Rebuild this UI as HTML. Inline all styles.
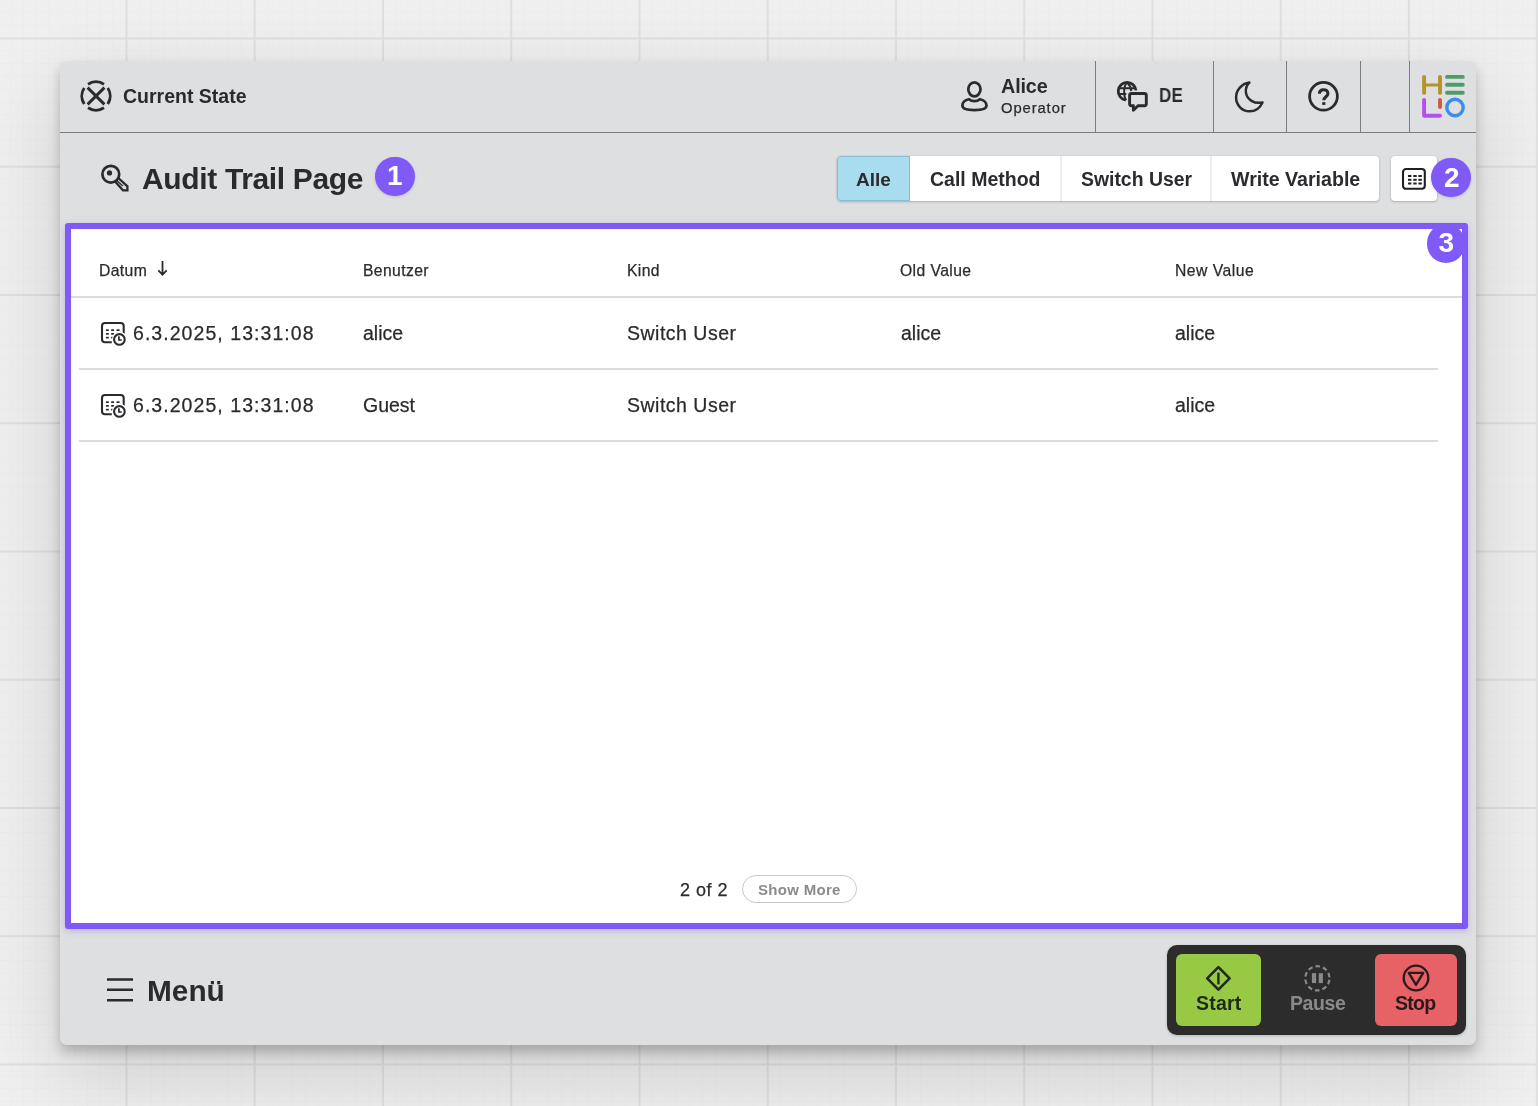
<!DOCTYPE html>
<html><head><meta charset="utf-8">
<style>
html,body{margin:0;padding:0}
body{width:1538px;height:1106px;overflow:hidden;position:relative;background-color:#efefef;font-family:"Liberation Sans",sans-serif;color:#2a2b2e;
background-image:
 linear-gradient(to right,#dfdfdf 0,#dfdfdf 1.5px,transparent 1.5px),
 linear-gradient(to bottom,#dfdfdf 0,#dfdfdf 1.5px,transparent 1.5px),
 linear-gradient(to right,#ececec 0,#ececec 1px,transparent 1px),
 linear-gradient(to bottom,#ececec 0,#ececec 1px,transparent 1px);
background-size:128.25px 128.25px,128.25px 128.25px,12.825px 12.825px,12.825px 12.825px;
background-position:125.5px 37.5px,125.5px 37.5px,125.5px 37.5px,125.5px 37.5px;
}
.a{position:absolute}
.t{position:absolute;white-space:nowrap;line-height:1;will-change:transform;-webkit-text-stroke:.25px currentColor}
.b{font-weight:700;-webkit-text-stroke:0}
#panel{left:60px;top:61px;width:1415.5px;height:984px;border-radius:7px;background:#dedfe1;box-shadow:0 7px 12px rgba(0,0,0,.22),0 30px 80px rgba(0,0,0,.14)}
.vd{position:absolute;top:61px;height:71px;width:1px;background:#7b7c7e}
</style></head><body>
<div id="panel" class="a"></div>
<!-- header -->
<div class="a" style="left:60px;top:132px;width:1415.5px;height:1px;background:#7b7c7e"></div>
<div class="vd" style="left:1095px"></div>
<div class="vd" style="left:1213px"></div>
<div class="vd" style="left:1286px"></div>
<div class="vd" style="left:1360px"></div>
<div class="vd" style="left:1409px"></div>

<!-- current state -->
<svg class="a" style="left:78px;top:78px" width="36" height="36" viewBox="0 0 36 36" fill="none" stroke="#2a2b2e" stroke-width="2.9" stroke-linecap="butt">
 <path d="M10.06 6.23 A14.2 14.2 0 0 1 25.94 6.23"/>
 <path d="M29.77 10.06 A14.2 14.2 0 0 1 29.77 25.94"/>
 <path d="M25.94 29.77 A14.2 14.2 0 0 1 10.06 29.77"/>
 <path d="M6.23 25.94 A14.2 14.2 0 0 1 6.23 10.06"/>
 <path d="M9.6 9.6 L26.4 26.4 M26.4 9.6 L9.6 26.4"/>
</svg>
<div id="cs" class="t b" style="left:123.3px;top:87.2px;font-size:19.5px;">Current State</div>

<!-- user -->
<svg class="a" style="left:958px;top:78px" width="34" height="36" viewBox="0 0 34 36" fill="none" stroke="#2a2b2e" stroke-width="2.7">
 <ellipse cx="16.4" cy="11.3" rx="6.1" ry="7"/>
 <path d="M11 21.2 C6.6 22.1 4.4 25 4.4 27.6 C4.4 30.8 9.5 32.2 16.4 32.2 C23.3 32.2 28.5 30.8 28.5 27.6 C28.5 25 26.2 22.1 21.8 21.2 C20.4 22.5 18.6 23.1 16.4 23.1 C14.2 23.1 12.4 22.5 11 21.2 Z"/>
</svg>
<div id="alice" class="t b" style="left:1000.8px;top:76.9px;font-size:19.8px;letter-spacing:-.15px">Alice</div>
<div id="oper" class="t" style="left:1001.3px;top:101.4px;font-size:14.8px;letter-spacing:.9px">Operator</div>

<!-- language -->
<svg class="a" style="left:1114px;top:78px" width="38" height="36" viewBox="0 0 38 36" fill="none" stroke="#2a2b2e" stroke-width="2.2">
 <path d="M22 12.3 A8.9 8.9 0 1 0 11.5 22.1" stroke-width="2.8"/>
 <path d="M5 10.2 H21.5 M4.6 16.1 H12.3" stroke-width="2"/>
 <path d="M13.1 4.4 C9.3 7.5 9.3 19 12.3 22.2 M13.1 4.4 C15.5 6.5 16.8 9.5 17.3 13" stroke-width="2"/>
 <path d="M17.6 15.5 H30.3 Q32.3 15.5 32.3 17.5 V25.8 Q32.3 27.8 30.3 27.8 H24 L19.4 32.2 V27.8 H17.6 Q15.6 27.8 15.6 25.8 V17.5 Q15.6 15.5 17.6 15.5 Z" stroke-width="2.9" stroke-linejoin="round"/>
</svg>
<div id="de" class="t b" style="left:1158.6px;top:86.4px;font-size:19.8px;letter-spacing:.3px;transform:scaleX(.86);transform-origin:0 0">DE</div>

<!-- moon -->
<svg class="a" style="left:1232px;top:79px" width="34" height="36" viewBox="0 0 34 36" fill="none" stroke="#2a2b2e" stroke-width="2.5" stroke-linejoin="round">
 <path d="M17.4 3.6 C9.8 4.8 4.1 11 4.1 18.5 C4.1 26.2 10.1 32.3 17.6 32.3 C23.2 32.3 28.1 28.6 30.5 23.4 C22.4 25.3 14.8 20.6 13.9 13.4 C13.5 9.6 14.8 6 17.4 3.6 Z"/>
</svg>
<!-- help -->
<svg class="a" style="left:1306px;top:79px" width="36" height="36" viewBox="0 0 36 36" fill="none" stroke="#2a2b2e" stroke-width="2.5">
 <circle cx="17.5" cy="17.3" r="13.9" stroke-width="2.8"/>
 <path d="M13.4 14.8 C13.4 12.1 15.3 10.7 17.7 10.7 C20.1 10.7 21.9 12.2 21.9 14.5 C21.9 17.8 17.8 17.6 17.8 21.3" stroke-width="3.1" stroke-linecap="butt"/>
 <rect x="16.2" y="23.2" width="3.2" height="2.7" fill="#2a2b2e" stroke="none"/>
</svg>

<!-- logo -->
<svg class="a" style="left:1418px;top:70px" width="52" height="52" viewBox="0 0 52 52" fill="none" stroke-width="3.9" stroke-linecap="round">
 <path d="M6.1 7 V22.9 M22 7 V22.9" stroke="#b5932a"/>
 <path d="M6.1 15 H22" stroke="#b5932a" stroke-width="3"/>
 <path d="M29 6.9 H44.8 M29 14.7 H44.8 M29 22.8 H44.8" stroke="#4f9c6b"/>
 <path d="M6.1 29.9 V45.7 H22" stroke="#b54ff0" stroke-linejoin="round"/>
 <path d="M22 29.9 V37" stroke="#cc5a3c"/>
 <circle cx="37" cy="37.5" r="8.2" stroke="#3b8ef0" stroke-width="3.4"/>
</svg>

<!-- title -->
<svg class="a" style="left:98px;top:161px" width="36" height="36" viewBox="0 0 36 36" fill="none" stroke="#2a2b2e" stroke-width="2.7">
 <circle cx="12.8" cy="13.2" r="8.4"/>
 <circle cx="11.5" cy="11.9" r="2.6" fill="#2a2b2e" stroke="none"/>
 <path d="M16.9 20.3 L25 29.3 H29.4 V25.3 L20.3 17" stroke-linejoin="miter" stroke-width="2.3"/>
 <path d="M18.6 19.3 L24.8 24.9" stroke-width="1.3"/>
</svg>
<div id="title" class="t b" style="left:141.8px;top:163.5px;font-size:30px;letter-spacing:-.35px">Audit Trail Page</div>
<div class="a" style="left:375px;top:156.5px;width:39.5px;height:39.5px;border-radius:50%;background:#7f5af6;box-shadow:0 1px 3px rgba(0,0,0,.15)"></div>
<div id="b1" class="t b" style="left:375px;top:162px;width:39.5px;text-align:center;font-size:28px;color:#fff">1</div>

<!-- filter segmented -->
<div class="a" style="left:837px;top:155.5px;width:542px;height:45.5px;border-radius:4px;background:#fff;box-shadow:0 1px 2.5px rgba(0,0,0,.2),0 0 1.5px rgba(0,0,0,.12);overflow:hidden">
 <div class="a" style="left:0;top:0;width:73px;height:45.5px;background:#a9dcef;box-shadow:inset 0 0 0 1px #86bcd6;border-radius:4px 0 0 4px"></div>
 <div class="a" style="left:222.5px;top:0;width:2px;height:45.5px;background:#ededed"></div>
 <div class="a" style="left:372.5px;top:0;width:2px;height:45.5px;background:#ededed"></div>
</div>
<div id="f1" class="t b" style="left:856px;top:169.6px;font-size:19px;">Alle</div>
<div id="f2" class="t b" style="left:930px;top:169.6px;font-size:19.5px;">Call Method</div>
<div id="f3" class="t b" style="left:1080.5px;top:169.6px;font-size:19.4px;">Switch User</div>
<div id="f4" class="t b" style="left:1230.5px;top:169.6px;font-size:19.6px;">Write Variable</div>

<!-- calendar button -->
<div class="a" style="left:1390.5px;top:155.5px;width:46px;height:45.5px;border-radius:4px;background:#fff;box-shadow:0 1px 2.5px rgba(0,0,0,.2),0 0 1.5px rgba(0,0,0,.12)"></div>
<svg class="a" style="left:1400px;top:166px" width="28" height="25" viewBox="0 0 28 25" fill="none" stroke="#1f2022" stroke-width="2.1">
 <rect x="3" y="3" width="21.8" height="19.8" rx="3"/>
 <g fill="#1f2022" stroke="none">
  <rect x="8" y="9" width="3.4" height="2"/><rect x="13.3" y="9" width="3.4" height="2"/><rect x="18.4" y="9" width="3.4" height="2"/>
  <rect x="8" y="12.8" width="3.4" height="2"/><rect x="13.3" y="12.8" width="3.4" height="2"/><rect x="18.4" y="12.8" width="3.4" height="2"/>
  <rect x="8" y="16.5" width="3.4" height="2"/><rect x="13.3" y="16.5" width="3.4" height="2"/><rect x="18.4" y="16.5" width="3.4" height="2"/>
 </g>
</svg>
<div class="a" style="left:1431px;top:157.5px;width:39.5px;height:39.5px;border-radius:50%;background:#7f5af6;box-shadow:0 1px 3px rgba(0,0,0,.15)"></div>
<div id="b2" class="t b" style="left:1431.5px;top:163.5px;width:39.5px;text-align:center;font-size:28px;color:#fff">2</div>

<!-- table box -->
<div class="a" style="left:65px;top:222.5px;width:1390.5px;height:694px;border:6px solid #7f5af6;border-radius:3px;background:#fff;box-shadow:0 2px 6px rgba(100,70,200,.28)"></div>

<!-- badge 3 -->
<div class="a" style="left:1426.5px;top:224px;width:38.5px;height:38.5px;border-radius:50%;background:#7f5af6"></div>
<div id="b3" class="t b" style="left:1427px;top:229.3px;width:38.5px;text-align:center;font-size:28px;color:#fff">3</div>

<!-- table content -->
<div id="h1" class="t" style="left:99px;top:262.5px;font-size:15.7px;letter-spacing:.4px">Datum</div>
<svg class="a" style="left:155px;top:259px" width="16" height="20" viewBox="0 0 16 20" fill="none" stroke="#2a2b2e" stroke-width="1.8">
 <path d="M7.5 2 V15.6 M3.3 11.3 L7.5 15.6 L11.7 11.3"/>
</svg>
<div id="h2" class="t" style="left:362.5px;top:262.5px;font-size:15.7px;letter-spacing:.4px">Benutzer</div>
<div id="h3" class="t" style="left:626.5px;top:262.5px;font-size:15.7px;letter-spacing:.4px">Kind</div>
<div id="h4" class="t" style="left:900px;top:262.5px;font-size:15.7px;letter-spacing:.42px">Old Value</div>
<div id="h5" class="t" style="left:1174.5px;top:262.5px;font-size:15.7px;letter-spacing:.5px">New Value</div>
<div class="a" style="left:71px;top:296px;width:1390.5px;height:1.5px;background:#dcdcdc"></div>

<svg class="a" style="left:98px;top:319px" width="32" height="30" viewBox="0 0 32 30" fill="none" stroke="#2a2b2e" stroke-width="2">
 <path d="M13.8 23.2 H7 Q4 23.2 4 20.2 V7 Q4 4 7 4 H22.7 Q25.7 4 25.7 7 V14.4" stroke-width="2.1"/>
 <g fill="#2a2b2e" stroke="none"><rect x="7.9" y="10.3" width="2.9" height="1.8" rx=".5"/><rect x="13.1" y="10.3" width="2.9" height="1.8" rx=".5"/><rect x="18.5" y="10.3" width="3.1" height="1.8" rx=".5"/><rect x="7.9" y="14" width="2.9" height="1.8" rx=".5"/><rect x="13.1" y="14" width="2.9" height="1.8" rx=".5"/><rect x="7.9" y="17.7" width="2.9" height="1.8" rx=".5"/><rect x="13.1" y="17.7" width="2.9" height="1.8" rx=".5"/></g>
 <circle cx="21.4" cy="20.4" r="7.6" fill="#fff" stroke="none"/>
 <circle cx="21.4" cy="20.4" r="5.3" stroke-width="2.1"/>
 <path d="M20.9 17.2 V21 H23.8" stroke-width="1.7"/>
</svg>
<div id="r1c1" class="t" style="left:132.5px;top:324px;font-size:19.5px;letter-spacing:1.05px">6.3.2025, 13:31:08</div>
<div id="r1c2" class="t" style="left:362.5px;top:324px;font-size:19.5px;">alice</div>
<div id="r1c3" class="t" style="left:627px;top:324px;font-size:19.5px;letter-spacing:.5px">Switch User</div>
<div id="r1c4" class="t" style="left:901px;top:324px;font-size:19.5px;">alice</div>
<div id="r1c5" class="t" style="left:1175px;top:324px;font-size:19.5px;">alice</div>
<div class="a" style="left:79px;top:368px;width:1359px;height:1.5px;background:#dcdcdc"></div>

<svg class="a" style="left:98px;top:391px" width="32" height="30" viewBox="0 0 32 30" fill="none" stroke="#2a2b2e" stroke-width="2">
 <path d="M13.8 23.2 H7 Q4 23.2 4 20.2 V7 Q4 4 7 4 H22.7 Q25.7 4 25.7 7 V14.4" stroke-width="2.1"/>
 <g fill="#2a2b2e" stroke="none"><rect x="7.9" y="10.3" width="2.9" height="1.8" rx=".5"/><rect x="13.1" y="10.3" width="2.9" height="1.8" rx=".5"/><rect x="18.5" y="10.3" width="3.1" height="1.8" rx=".5"/><rect x="7.9" y="14" width="2.9" height="1.8" rx=".5"/><rect x="13.1" y="14" width="2.9" height="1.8" rx=".5"/><rect x="7.9" y="17.7" width="2.9" height="1.8" rx=".5"/><rect x="13.1" y="17.7" width="2.9" height="1.8" rx=".5"/></g>
 <circle cx="21.4" cy="20.4" r="7.6" fill="#fff" stroke="none"/>
 <circle cx="21.4" cy="20.4" r="5.3" stroke-width="2.1"/>
 <path d="M20.9 17.2 V21 H23.8" stroke-width="1.7"/>
</svg>
<div id="r2c1" class="t" style="left:132.5px;top:396px;font-size:19.5px;letter-spacing:1.05px">6.3.2025, 13:31:08</div>
<div id="r2c2" class="t" style="left:362.5px;top:396px;font-size:19.5px;">Guest</div>
<div id="r2c3" class="t" style="left:627px;top:396px;font-size:19.5px;letter-spacing:.5px">Switch User</div>
<div id="r2c5" class="t" style="left:1175px;top:396px;font-size:19.5px;">alice</div>
<div class="a" style="left:79px;top:440px;width:1359px;height:1.5px;background:#dcdcdc"></div>

<!-- pagination -->
<div id="pg" class="t" style="left:680px;top:880.5px;font-size:18px;letter-spacing:.5px">2 of 2</div>
<div class="a" style="left:741.5px;top:874.5px;width:113.5px;height:26.5px;border:1px solid #c9c9c9;border-radius:14px"></div>
<div id="sm" class="t b" style="left:757.5px;top:882.1px;font-size:15px;color:#8b8b8b;letter-spacing:.3px">Show More</div>

<!-- footer -->
<svg class="a" style="left:104px;top:974px" width="32" height="32" viewBox="0 0 32 32" fill="none" stroke="#2a2b2e" stroke-width="2.6">
 <path d="M3 5.5 H29 M3 15.7 H29 M3 26.2 H29"/>
</svg>
<div id="menu" class="t b" style="left:147px;top:975.8px;font-size:29.8px;">Menü</div>

<!-- controls -->
<div class="a" style="left:1166.5px;top:944.5px;width:299.5px;height:90.5px;border-radius:10px;background:#2c2c2c;box-shadow:0 1px 3px rgba(0,0,0,.2)"></div>
<div class="a" style="left:1176px;top:954px;width:84.5px;height:72px;border-radius:6px;background:#98c945"></div>
<div class="a" style="left:1375px;top:954px;width:82px;height:72px;border-radius:6px;background:#e66266"></div>
<svg class="a" style="left:1203px;top:963px" width="32" height="32" viewBox="0 0 32 32" fill="none" stroke="#1e2a16" stroke-width="2.3">
 <path d="M15.4 4.2 L26.6 15.4 L15.4 26.6 L4.2 15.4 Z" stroke-width="2.6" stroke-linejoin="round"/>
 <path d="M15.4 9.6 V21.3" stroke-width="2.4"/>
</svg>
<div id="start" class="t b" style="left:1195.5px;top:994.4px;font-size:19.5px;color:#1e2a16;letter-spacing:.2px">Start</div>
<svg class="a" style="left:1302px;top:963px" width="32" height="32" viewBox="0 0 32 32" fill="none" stroke="#8a8a8c" stroke-width="2.3">
 <circle cx="15.4" cy="15.3" r="12.1" stroke-dasharray="4.6 3.003" stroke-dashoffset="-1.5" stroke-width="2.2"/>
 <rect x="9.9" y="10.2" width="4.2" height="9.9" fill="#8a8a8c" stroke="none"/>
 <rect x="16.7" y="10.2" width="4.2" height="9.9" fill="#8a8a8c" stroke="none"/>
</svg>
<div id="pause" class="t b" style="left:1289.5px;top:994.4px;font-size:19.5px;color:#8a8a8c;letter-spacing:-.4px">Pause</div>
<svg class="a" style="left:1400px;top:962px" width="32" height="32" viewBox="0 0 32 32" fill="none" stroke="#2a1a1c" stroke-width="2.3">
 <circle cx="16" cy="16" r="12.3"/>
 <path d="M8.8 10.8 H23.2 L16 22.8 Z" stroke-linejoin="round"/>
</svg>
<div id="stop" class="t b" style="left:1395px;top:994.4px;font-size:19.5px;color:#2a1a1c;letter-spacing:-.7px">Stop</div>

</body></html>
